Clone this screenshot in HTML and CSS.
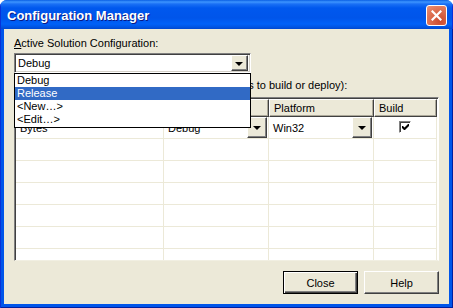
FILE: index.html
```html
<!DOCTYPE html>
<html lang="en">
<head>
  <meta charset="UTF-8" />
  <title>Configuration Manager</title>
  <link rel="stylesheet" href="styles.css">
</head>
<body>
  <div class="window">
    <div class="titlebar">
      <span class="title">Configuration Manager</span>
      <button class="close" aria-label="Close">
        <svg width="11" height="11" viewBox="0 0 11 11"><path d="M1.5 1.5 L9.5 9.5 M9.5 1.5 L1.5 9.5" stroke="#fff" stroke-width="2.2" stroke-linecap="square"/></svg>
      </button>
    </div>

    <div class="frame">
      <div class="client">
        <div class="caption"><u>A</u>ctive Solution Configuration:</div>

        <div class="combo-wrap">
          <div class="combo">
            <span class="combo-text">Debug</span>
            <span class="drop"><span class="tri"></span></span>
          </div>
          <ul class="list">
            <li>Debug</li>
            <li class="selected">Release</li>
            <li>&lt;New…&gt;</li>
            <li>&lt;Edit…&gt;</li>
          </ul>
        </div>

        <div class="caption contexts"><u>P</u>roject contexts (check the project configurations to build or deploy):</div>

        <div class="grid">
          <div class="row head">
            <div class="cell">Project</div>
            <div class="cell">Configuration</div>
            <div class="cell">Platform</div>
            <div class="cell">Build</div>
          </div>
          <div class="row">
            <div class="cell text">Bytes</div>
            <div class="cell pick"><span>Debug</span><span class="drop"><span class="tri"></span></span></div>
            <div class="cell pick"><span>Win32</span><span class="drop"><span class="tri"></span></span></div>
            <div class="cell check">
              <span class="box"><svg class="tick" width="7" height="7" viewBox="0 0 7 7"><path d="M0 2 L0 4 L2 6 L3 6 L7 2 L7 0 L6 0 L2.5 3.5 L1 2 Z" fill="#000"/></svg></span>
            </div>
          </div>
          <div class="row"><div class="cell"></div><div class="cell"></div><div class="cell"></div><div class="cell"></div></div>
          <div class="row"><div class="cell"></div><div class="cell"></div><div class="cell"></div><div class="cell"></div></div>
          <div class="row"><div class="cell"></div><div class="cell"></div><div class="cell"></div><div class="cell"></div></div>
          <div class="row"><div class="cell"></div><div class="cell"></div><div class="cell"></div><div class="cell"></div></div>
          <div class="row"><div class="cell"></div><div class="cell"></div><div class="cell"></div><div class="cell"></div></div>
          <div class="row"><div class="cell"></div><div class="cell"></div><div class="cell"></div><div class="cell"></div></div>
        </div>

        <div class="buttons">
          <button class="btn default">Close</button>
          <button class="btn">Help</button>
        </div>
      </div>
    </div>
  </div>
</body>
</html>
```

FILE: styles.css
```css
body {
  margin: 0;
  background: #fff;
  font-family: "Liberation Sans", Arial, sans-serif;
  font-size: 11px;
  color: #000;
}

.window {
  width: 453px;
  height: 308px;
  display: flex;
  flex-direction: column;
  border-radius: 7px 7px 0 0;
  overflow: hidden;
  background: #0055ea;
}

.titlebar {
  height: 29px;
  flex: none;
  display: flex;
  align-items: center;
  justify-content: space-between;
  padding: 0 6px 0 7px;
  background: linear-gradient(to bottom, #0a5fe4 0px, #3d95ff 2px, #1a70f5 4px, #0058ee 8px, #0055ea 18px, #0061f8 24px, #0054e3 27px, #0047cf 29px);
  box-shadow: inset 1px 0 #0831d9, inset -1px 0 #0831d9;
}

.title {
  color: #fff;
  font-weight: bold;
  font-size: 13px;
  text-shadow: 1px 1px #0a1883;
  padding-top: 1px;
}

.close {
  width: 21px;
  height: 21px;
  padding: 0;
  margin-top: 1px;
  display: flex;
  align-items: center;
  justify-content: center;
  border: 1px solid #fff;
  border-radius: 3px;
  background: radial-gradient(circle at 70% 80%, #cc4a2e 0%, #e27a5b 70%, #e9937a 100%);
}

.frame {
  flex: 1;
  display: flex;
  padding: 0 4px 4px;
  background: #0055ea;
  box-shadow: inset 1px 0 #0831d9, inset -1px 0 #001ea0, inset 0 -1px #001ea0;
}

.client {
  flex: 1;
  display: flex;
  flex-direction: column;
  padding: 8px 10px 0;
  background: #ece9d8;
}

.caption {
  line-height: 13px;
  height: 13px;
  white-space: nowrap;
}

.combo-wrap {
  position: relative;
  margin-top: 3px;
  width: 237px;
}

.combo {
  height: 20px;
  box-sizing: border-box;
  display: flex;
  align-items: center;
  justify-content: space-between;
  background: #fff;
  border: 1px solid;
  border-color: #808080 #fff #fff #808080;
  box-shadow: inset 1px 1px #404040, inset -1px -1px #d4d0c8;
  padding: 0 2px 0 3px;
}

.drop {
  width: 17px;
  height: 16px;
  box-sizing: border-box;
  display: flex;
  align-items: center;
  justify-content: center;
  background: #ece9d8;
  border: 1px solid;
  border-color: #fff #404040 #404040 #fff;
  box-shadow: inset -1px -1px #808080;
}

.tri {
  width: 0;
  height: 0;
  border-left: 4px solid transparent;
  border-right: 4px solid transparent;
  border-top: 4px solid #000;
  margin: 1px 0 0 -1px;
}

.list {
  position: absolute;
  top: 20px;
  left: 0;
  width: 237px;
  height: 55px;
  box-sizing: border-box;
  margin: 0;
  padding: 0;
  list-style: none;
  background: #fff;
  border: 1px solid #000;
  z-index: 2;
}

.list li {
  height: 13px;
  line-height: 13px;
  padding-left: 2px;
}

.list li.selected {
  background: #316ac5;
  color: #fff;
}

.contexts {
  margin-top: 6px;
}

.grid {
  margin-top: 5px;
  width: 425px;
  height: 164px;
  box-sizing: border-box;
  overflow: hidden;
  background: #fff;
  border: 1px solid;
  border-color: #808080 #fff #f1efe2 #808080;
  box-shadow: inset 1px 1px #404040;
  padding: 1px 0 0 1px;
}

.row {
  display: grid;
  grid-template-columns: 148px 105px 105px 63px;
  height: 22px;
}

.cell {
  box-sizing: border-box;
  border-right: 1px solid #ece9d8;
  border-bottom: 1px solid #ece9d8;
  display: flex;
  align-items: center;
  padding-left: 4px;
  white-space: nowrap;
  overflow: hidden;
}

.row.head {
  height: 18px;
}

.head .cell {
  background: #ece9d8;
  border: 1px solid;
  border-color: #fff #404040 #404040 #fff;
  box-shadow: inset -1px -1px #aca899;
  padding-left: 4px;
}

.cell.text {
  padding-left: 4px;
}

.cell.pick {
  justify-content: space-between;
  padding: 0 1px 0 4px;
}

.cell.pick .drop {
  width: 20px;
  height: 21px;
  align-self: flex-start;
}

.cell.check {
  justify-content: center;
  padding: 0 0 1px;
}

.box {
  width: 12px;
  height: 12px;
  flex: none;
  box-sizing: border-box;
  display: flex;
  align-items: center;
  justify-content: center;
  background: #fff;
  border: 1px solid;
  border-color: #808080 #fff #fff #808080;
  box-shadow: inset 1px 1px #404040;
  padding: 1px 0 0 1px;
}

.tick {
  display: block;
  flex: none;
}

.buttons {
  margin-top: 10px;
  display: flex;
  justify-content: flex-end;
  gap: 6px;
}

.btn {
  width: 75px;
  height: 23px;
  padding: 0;
  font-family: inherit;
  font-size: 11px;
  color: #000;
  background: #ece9d8;
  border: 1px solid;
  border-color: #fff #404040 #404040 #fff;
  box-shadow: inset -1px -1px #808080;
}

.btn.default {
  border: 1px solid #000;
  box-shadow: inset 1px 1px #fff, inset -1px -1px #404040, inset -2px -2px #808080;
}
```
